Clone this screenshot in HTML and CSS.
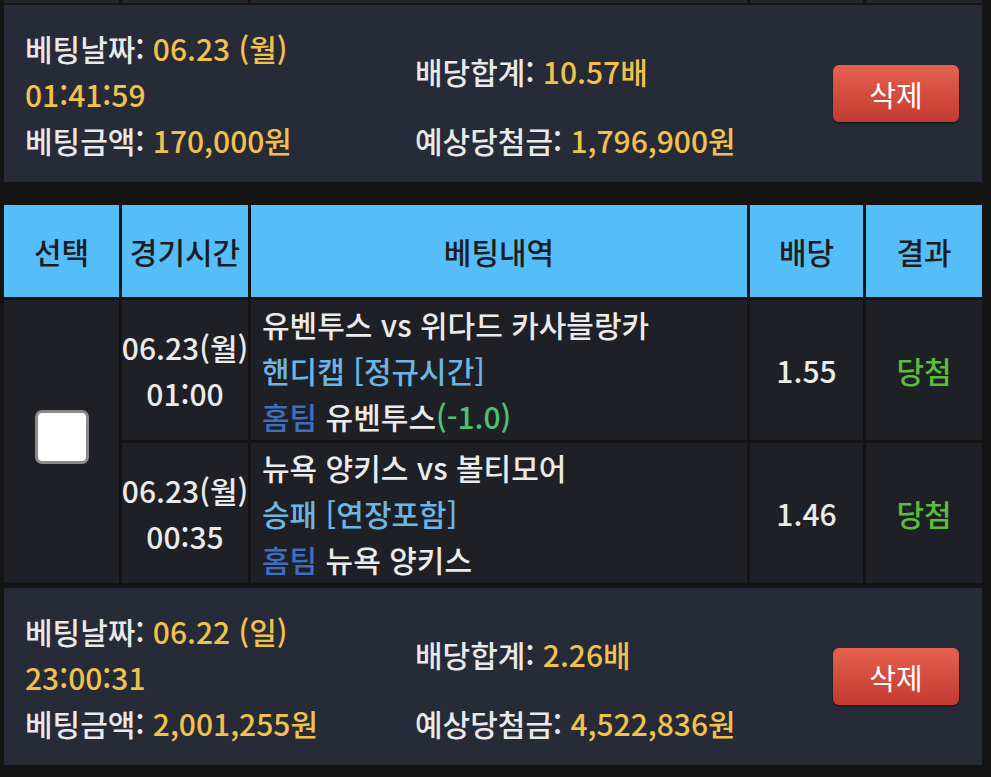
FILE: index.html
```html
<!DOCTYPE html>
<html lang="ko">
<head>
  <meta charset="UTF-8">
  <meta name="viewport" content="width=device-width, initial-scale=1.0">
  <title>베팅내역</title>
  <link rel="stylesheet" href="styles.css">
</head>
<body>
<div class="page">
  <div class="strip">
    <span></span><span></span><span></span><span></span><span></span>
  </div>

  <div class="summary">
    <div class="info">
      <div class="date">베팅날짜: <b>06.23 (월)<br>01:41:59</b></div>
      <div class="rate">배당합계: <b>10.57배</b></div>
      <div class="amount">베팅금액: <b>170,000원</b></div>
      <div class="win">예상당첨금: <b>1,796,900원</b></div>
    </div>
    <button class="del">삭제</button>
  </div>

  <div class="bets">
    <div class="head">선택</div>
    <div class="head">경기시간</div>
    <div class="head">베팅내역</div>
    <div class="head">배당</div>
    <div class="head">결과</div>

    <div class="select"><span class="check"></span></div>

    <div class="time">06.23(월)<br>01:00</div>
    <div class="detail">
      <div>유벤투스 vs 위다드 카사블랑카</div>
      <div class="market">핸디캡 [정규시간]</div>
      <div><span class="pick">홈팀</span> 유벤투스<span class="line">(-1.0)</span></div>
    </div>
    <div class="odds">1.55</div>
    <div class="result">당첨</div>

    <div class="time">06.23(월)<br>00:35</div>
    <div class="detail">
      <div>뉴욕 양키스 vs 볼티모어</div>
      <div class="market">승패 [연장포함]</div>
      <div><span class="pick">홈팀</span> 뉴욕 양키스</div>
    </div>
    <div class="odds">1.46</div>
    <div class="result">당첨</div>
  </div>

  <div class="summary">
    <div class="info">
      <div class="date">베팅날짜: <b>06.22 (일)<br>23:00:31</b></div>
      <div class="rate">배당합계: <b>2.26배</b></div>
      <div class="amount">베팅금액: <b>2,001,255원</b></div>
      <div class="win">예상당첨금: <b>4,522,836원</b></div>
    </div>
    <button class="del">삭제</button>
  </div>
</div>
</body>
</html>
```

FILE: styles.css
```css
* {
  font-family: "Noto Sans CJK KR", "Noto Sans", sans-serif;
  box-sizing: border-box;
}
body {
  margin: 0;
  background: #141415;
  color: #ebebeb;
}
.page {
  width: 978px;
  margin-left: 4px;
}

.strip, .bets {
  display: grid;
  grid-template-columns: 115px 126px 496px 113px 116px;
  column-gap: 3px;
}
.strip {
  height: 3px;
  margin-bottom: 2px;
}
.strip span {
  background: #25262b;
}

.summary {
  display: flex;
  align-items: center;
  height: 177px;
  padding: 0 23px 0 21px;
  background: #272a37;
}
.info {
  flex: 1;
  display: grid;
  grid-template-columns: 390px 1fr;
  align-items: center;
  font-size: 30px;
  font-weight: 500;
  line-height: 46px;
  color: #e9e9e9;
}
.info b {
  font-weight: 500;
  color: #f1c14e;
}
.del {
  width: 126px;
  height: 57px;
  border: 0;
  border-radius: 6px;
  background: linear-gradient(#e4614f, #c33a2f);
  box-shadow: 0 1px 2px rgba(0,0,0,.6);
  color: #fff;
  font-size: 29px;
  padding: 0;
}

.bets {
  grid-template-rows: 92px 140px 140px;
  row-gap: 3px;
  margin: 23px 0 5px;
  font-size: 30px;
  font-weight: 500;
  line-height: 46px;
}
.head {
  background: #55bef8;
  color: #1b1d22;
  display: flex;
  align-items: center;
  justify-content: center;
}
.select, .time, .detail, .odds, .result {
  background: #1f2025;
}
.select {
  grid-row: 2 / 4;
  display: flex;
  align-items: center;
  justify-content: center;
}
.check {
  width: 54px;
  height: 54px;
  margin-bottom: 10px;
  background: #fff;
  border: 3px solid #8a8a8a;
  border-radius: 7px;
}
.time, .odds, .result {
  display: flex;
  align-items: center;
  justify-content: center;
  text-align: center;
}
.detail {
  padding: 1px 0 0 11px;
  white-space: nowrap;
}
.market {
  color: #6cb6e4;
}
.pick {
  color: #3f6dc2;
}
.line {
  color: #4fbf78;
}
.result {
  color: #5bbd3b;
}
```
